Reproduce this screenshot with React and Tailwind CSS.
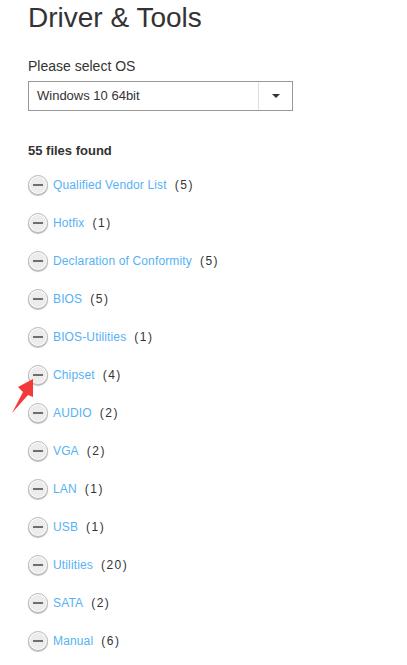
import React from "react";

const categories = [
  { name: "Qualified Vendor List", count: "5" },
  { name: "Hotfix", count: "1" },
  { name: "Declaration of Conformity", count: "5" },
  { name: "BIOS", count: "5" },
  { name: "BIOS-Utilities", count: "1" },
  { name: "Chipset", count: "4", arrow: true },
  { name: "AUDIO", count: "2" },
  { name: "VGA", count: "2" },
  { name: "LAN", count: "1" },
  { name: "USB", count: "1" },
  { name: "Utilities", count: "20" },
  { name: "SATA", count: "2" },
  { name: "Manual", count: "6" },
];

function MinusButton() {
  return (
    <span className="flex h-[20px] w-[20px] shrink-0 items-center justify-center rounded-full border border-[#bcbcbc] bg-[#ececec] shadow-[inset_0_0_0_1px_#ffffff,0_1px_1px_#b8b8b8]">
      <span className="h-[2px] w-[10px] bg-[#6e6e6e]" />
    </span>
  );
}

function RedArrow() {
  return (
    <svg className="absolute left-[-18px] top-[12px]" width="26" height="37" viewBox="0 0 26 37">
      <path d="M2 36 L13 15 L8 10 L23 2 L23 20 L18 18 Z" fill="#f4393a" />
    </svg>
  );
}

export default function App() {
  return (
    <div className="h-[665px] overflow-hidden bg-white pl-[28px] font-['Liberation_Sans',Arial,sans-serif] text-[#333333]">
      <h1 className="pt-[1px] text-[28px] leading-[34px] text-[#333333]">Driver &amp; Tools</h1>
      <p className="mt-[21px] text-[14px] leading-[20px]">Please select OS</p>
      <div className="mt-[5px] flex h-[30px] w-[265px] items-center border border-[#999999] text-[13px]">
        <span className="flex-1 pl-[8px]">Windows 10 64bit</span>
        <span className="flex h-full w-[34px] items-center justify-center border-l border-[#dddddd]">
          <span className="h-0 w-0 border-x-[4px] border-t-[4px] border-x-transparent border-t-[#333333]" />
        </span>
      </div>
      <p className="mt-[31px] text-[13px] font-bold leading-[18px]">55 files found</p>
      <ul className="mt-[15px] flex flex-col gap-[18px]">
        {categories.map((c) => (
          <li key={c.name} className="relative flex h-[20px] items-center text-[12px]">
            <MinusButton />
            <a className="ml-[5px] tracking-[0.14px] text-[#55b2f5]">{c.name}</a>
            <span className="ml-[8px] tracking-[1.5px]">({c.count})</span>
            {c.arrow && <RedArrow />}
          </li>
        ))}
      </ul>
    </div>
  );
}
